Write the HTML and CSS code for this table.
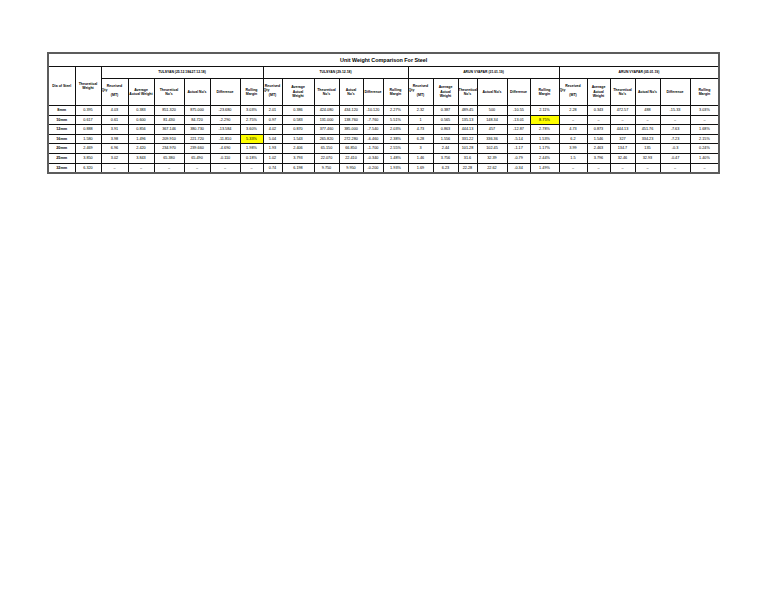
FILE: index.html
```html
<!DOCTYPE html>
<html>
<head>
<meta charset="utf-8">
<link rel="stylesheet" href="styles.css">
</head>
<body>
<div class="sheet">
<table class="grid">
<colgroup>
<col style="width:27px"><col style="width:26px">
<col style="width:27px"><col style="width:26px"><col style="width:30px"><col style="width:26px"><col style="width:30px"><col style="width:23px">
<col style="width:19px"><col style="width:32px"><col style="width:25px"><col style="width:24px"><col style="width:20px"><col style="width:25px">
<col style="width:25px"><col style="width:25px"><col style="width:19px"><col style="width:30px"><col style="width:23px"><col style="width:29px">
<col style="width:28px"><col style="width:23px"><col style="width:25px"><col style="width:25px"><col style="width:30px"><col style="width:29px">
</colgroup>
<tr class="r-title"><td class="title" colspan="26">Unit Weight Comparison For Steel</td></tr>
<tr class="r-group">
<td class="h side" rowspan="2">Dia of Steel</td>
<td class="h side" rowspan="2">Theoretical<br>Weight</td>
<td class="grp" colspan="6">TULSYAN (25.12.18&amp;27.12.18)</td>
<td class="grp" colspan="6">TULSYAN (29.12.18)</td>
<td class="grp" colspan="6">ARUN VYAPAR (31.01.19)</td>
<td class="grp" colspan="6">ARUN VYAPAR (05.01.19)</td>
</tr>
<tr class="r-head">
<td class="h"><div class="rq"><span class="c">Received</span><span class="l">Qty</span><span class="m">(MT)</span></div></td>
<td class="h">Average<br>Actual Weight</td>
<td class="h">Theoretical<br>No's</td>
<td class="h">Actual No's</td>
<td class="h">Difference</td>
<td class="h">Rolling<br>Margin</td>
<td class="h"><div class="rq"><span class="c">Received</span><span class="l">Qty</span><span class="m">(MT)</span></div></td>
<td class="h">Average<br>Actual<br>Weight</td>
<td class="h">Theoretical<br>No's</td>
<td class="h">Actual<br>No's</td>
<td class="h">Difference</td>
<td class="h">Rolling<br>Margin</td>
<td class="h"><div class="rq"><span class="c">Received</span><span class="l">Qty</span><span class="m">(MT)</span></div></td>
<td class="h">Average<br>Actual<br>Weight</td>
<td class="h">Theoretical<br>No's</td>
<td class="h">Actual No's</td>
<td class="h">Difference</td>
<td class="h">Rolling<br>Margin</td>
<td class="h"><div class="rq"><span class="c">Received</span><span class="l">Qty</span><span class="m">(MT)</span></div></td>
<td class="h">Average<br>Actual<br>Weight</td>
<td class="h">Theoretical<br>No's</td>
<td class="h">Actual No's</td>
<td class="h">Difference</td>
<td class="h">Rolling<br>Margin</td>
</tr>
<tr class="r-data">
<td class="dia">8mm</td><td>0.395</td>
<td>4.03</td><td>0.383</td><td>851.320</td><td>875.000</td><td>-23.680</td><td>3.03%</td>
<td>2.01</td><td>0.386</td><td>424.080</td><td>434.120</td><td>-10.120</td><td>2.27%</td>
<td>2.32</td><td>0.387</td><td>489.45</td><td>500</td><td>-10.55</td><td>2.11%</td>
<td>2.28</td><td>0.343</td><td>472.57</td><td>488</td><td>-15.33</td><td>3.03%</td>
</tr>
<tr class="r-data">
<td class="dia">10mm</td><td>0.617</td>
<td>0.61</td><td>0.600</td><td>81.430</td><td>84.720</td><td>-2.290</td><td>2.75%</td>
<td>0.97</td><td>0.583</td><td>131.000</td><td>138.760</td><td>-7.760</td><td>5.51%</td>
<td>1</td><td>0.565</td><td>135.13</td><td>148.34</td><td>-13.01</td><td class="hl">8.75%</td>
<td>–</td><td>–</td><td>–</td><td>–</td><td>–</td><td>–</td>
</tr>
<tr class="r-data">
<td class="dia">12mm</td><td>0.888</td>
<td>3.91</td><td>0.856</td><td>367.146</td><td>380.730</td><td>-13.584</td><td>3.60%</td>
<td>4.02</td><td>0.870</td><td>377.460</td><td>385.000</td><td>-7.540</td><td>2.03%</td>
<td>4.73</td><td>0.863</td><td>444.13</td><td>457</td><td>-12.87</td><td>2.78%</td>
<td>4.73</td><td>0.873</td><td>444.13</td><td>451.76</td><td>-7.63</td><td>1.68%</td>
</tr>
<tr class="r-data">
<td class="dia">16mm</td><td>1.580</td>
<td>3.98</td><td>1.496</td><td>209.910</td><td>221.720</td><td>-11.810</td><td class="hl">5.33%</td>
<td>5.04</td><td>1.543</td><td>265.820</td><td>272.280</td><td>-6.460</td><td>2.38%</td>
<td>6.28</td><td>1.556</td><td>331.22</td><td>336.36</td><td>-5.14</td><td>1.53%</td>
<td>6.2</td><td>1.546</td><td>327</td><td>334.23</td><td>-7.23</td><td>2.15%</td>
</tr>
<tr class="r-data">
<td class="dia">20mm</td><td>2.469</td>
<td>6.96</td><td>2.420</td><td>234.970</td><td>239.660</td><td>-4.690</td><td>1.98%</td>
<td>1.93</td><td>2.406</td><td>65.150</td><td>66.850</td><td>-1.700</td><td>2.55%</td>
<td>3</td><td>2.44</td><td>101.28</td><td>102.45</td><td>-1.17</td><td>1.17%</td>
<td>3.99</td><td>2.463</td><td>134.7</td><td>135</td><td>-0.3</td><td>0.24%</td>
</tr>
<tr class="r-data">
<td class="dia">25mm</td><td>3.850</td>
<td>3.02</td><td>3.843</td><td>65.380</td><td>65.490</td><td>-0.110</td><td>0.18%</td>
<td>1.02</td><td>3.793</td><td>22.070</td><td>22.410</td><td>-0.340</td><td>1.48%</td>
<td>1.46</td><td>3.756</td><td>31.6</td><td>32.39</td><td>-0.79</td><td>2.44%</td>
<td>1.5</td><td>3.796</td><td>32.46</td><td>32.93</td><td>-0.47</td><td>1.40%</td>
</tr>
<tr class="r-data">
<td class="dia">32mm</td><td>6.320</td>
<td>–</td><td>–</td><td>–</td><td>–</td><td>–</td><td>–</td>
<td>0.74</td><td>6.198</td><td>9.750</td><td>9.950</td><td>-0.200</td><td>1.93%</td>
<td>1.69</td><td>6.23</td><td>22.28</td><td>22.62</td><td>-0.34</td><td>1.49%</td>
<td>–</td><td>–</td><td>–</td><td>–</td><td>–</td><td>–</td>
</tr>
</table>
</div>
</body>
</html>
```
FILE: styles.css
```css
html, body {
  margin: 0;
  padding: 0;
  background: #ffffff;
}
body {
  font-family: "Liberation Sans", Arial, sans-serif;
  color: #000;
}
.sheet {
  padding: 52px 0 0 47px;
}
.grid {
  border-collapse: collapse;
  table-layout: fixed;
  width: 671px;
  border: 2px solid #5c5c5c;
}
.grid td {
  border: 1px solid #111;
  padding: 0;
  text-align: center;
  vertical-align: middle;
  font-size: 3.8px;
  line-height: 4.4px;
  white-space: nowrap;
  overflow: hidden;
}
.r-title td { height: 12px; }
.r-group td { height: 11px; }
.r-head td { height: 26px; }
.r-data td { height: 8.6px; }
.title {
  font-size: 5.4px !important;
  font-weight: bold;
  line-height: 6px !important;
}
.grp {
  font-weight: bold;
  font-size: 3.4px !important;
}
.h {
  font-weight: bold;
  font-size: 3.5px !important;
}
.side {
  vertical-align: middle;
}
.dia {
  font-weight: bold;
}
.hl {
  background: #ffff00;
}
.rq {
  display: flex;
  flex-direction: column;
  padding-bottom: 3px;
}
.rq .c { text-align: center; }
.rq .l { text-align: left; }
.rq .m { text-align: center; margin-top: 0.5px; }
```
